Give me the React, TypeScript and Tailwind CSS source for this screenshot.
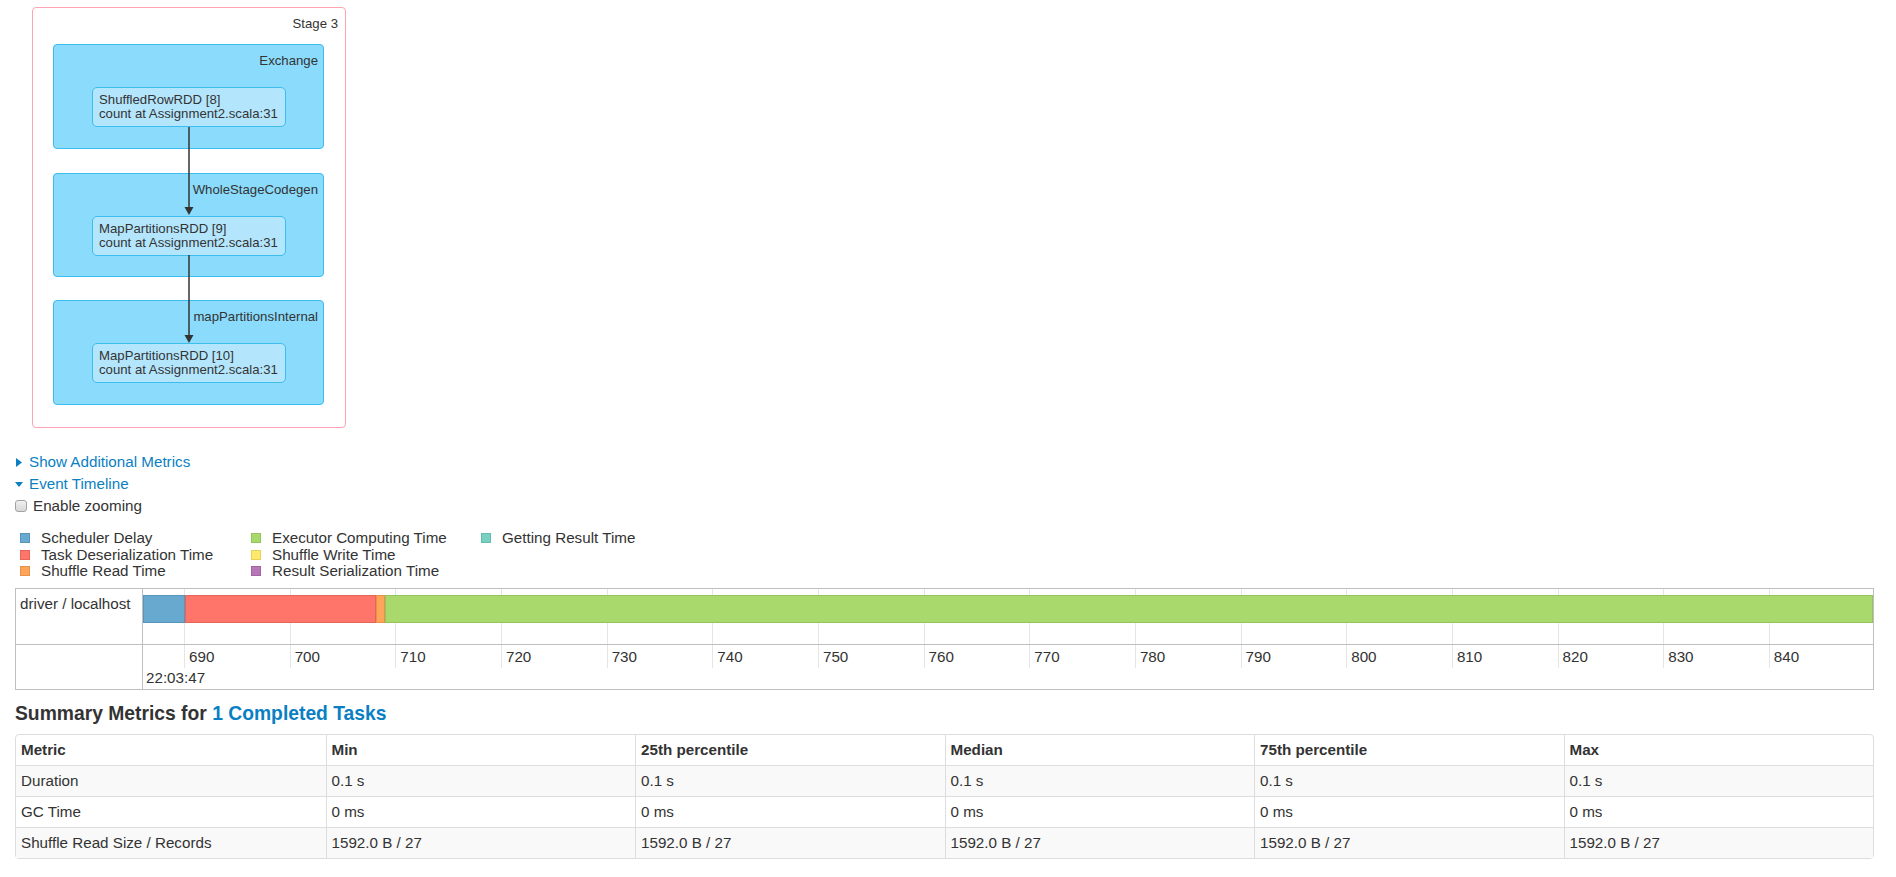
import React from "react";

const clusters = [
  { name: "Exchange", rdd: "ShuffledRowRDD [8]", h: "h-[105px]", mt: "mt-[13px]" },
  { name: "WholeStageCodegen", rdd: "MapPartitionsRDD [9]", h: "h-[104px]", mt: "mt-[24px]" },
  { name: "mapPartitionsInternal", rdd: "MapPartitionsRDD [10]", h: "h-[105px]", mt: "mt-[23px]" },
];

const legend = [
  { label: "Scheduler Delay", cls: "bg-[#67a9cf] border-[#5994bb]" },
  { label: "Task Deserialization Time", cls: "bg-[#ff7569] border-[#e5655a]" },
  { label: "Shuffle Read Time", cls: "bg-[#ffa55a] border-[#e6914c]" },
  { label: "Executor Computing Time", cls: "bg-[#a9d96d] border-[#94c45c]" },
  { label: "Shuffle Write Time", cls: "bg-[#ffe96b] border-[#e6d15c]" },
  { label: "Result Serialization Time", cls: "bg-[#b577b6] border-[#a065a2]" },
  { label: "Getting Result Time", cls: "bg-[#78d0c1] border-[#66bbad]" },
];

const ticks = [690, 700, 710, 720, 730, 740, 750, 760, 770, 780, 790, 800, 810, 820, 830, 840];

const columns = ["Metric", "Min", "25th percentile", "Median", "75th percentile", "Max"];

const rows = [
  { name: "Duration", value: "0.1 s", bg: "bg-[#f9f9f9]" },
  { name: "GC Time", value: "0 ms", bg: "bg-white" },
  { name: "Shuffle Read Size / Records", value: "1592.0 B / 27", bg: "bg-[#f9f9f9]" },
];

function StageDag() {
  return (
    <div className="relative ml-[17px] mt-[7px] h-[421px] w-[314px] rounded-[4px] border border-[#ffa3b3] pt-[8px] text-[13.2px] text-[#333]">
      <div className="h-[15px] pr-[7px] text-right leading-[15px]">Stage 3</div>
      {clusters.map((c) => (
        <div
          key={c.name}
          className={`${c.mt} ${c.h} ml-[20px] w-[271px] rounded-[4px] border border-[#3cbdee] bg-[#8adbfc] pt-[8px]`}
        >
          <div className="h-[15px] pr-[5px] text-right leading-[15px]">{c.name}</div>
          <div className="ml-[38px] mt-[19px] h-[40px] w-[194px] rounded-[5px] border border-[#3cbdee] bg-[#b3e6fd] px-[6px] pt-[5px] leading-[14px]">
            <div>{c.rdd}</div>
            <div>count at Assignment2.scala:31</div>
          </div>
        </div>
      ))}
      {/* edges between the RDD nodes */}
      <svg className="pointer-events-none absolute left-0 top-0" width="312" height="419">
        <line x1="156" y1="119" x2="156" y2="200" stroke="#333" strokeWidth="1.5" />
        <path d="M151.5 199 L160.5 199 L156 207 Z" fill="#333" />
        <line x1="156" y1="247" x2="156" y2="328" stroke="#333" strokeWidth="1.5" />
        <path d="M151.5 327 L160.5 327 L156 335 Z" fill="#333" />
      </svg>
    </div>
  );
}

function Timeline() {
  return (
    <div className="mt-[8px] flex h-[102px] border border-[#bfbfbf]">
      <div className="w-[127px] shrink-0 border-r border-[#bfbfbf]">
        <div className="h-[56px] border-b border-[#bfbfbf] pl-[4px] pt-[5px] leading-[20px]">driver / localhost</div>
      </div>
      <div className="min-w-0 flex-1 overflow-hidden">
        <div className="relative h-[56px] border-b border-[#bfbfbf]">
          <div className="flex h-full">
            <div className="w-[41px] shrink-0" />
            {ticks.map((t) => (
              <div key={t} className="h-full w-[105.67px] shrink-0 border-l border-[#e5e5e5]" />
            ))}
          </div>
          <div className="absolute left-0 right-0 top-[6px] flex h-[28px]">
            <div className="w-[42px] shrink-0 border border-[#5994bb] bg-[#67a9cf]" />
            <div className="w-[191px] shrink-0 border border-[#e5655a] bg-[#ff7569]" />
            <div className="w-[9px] shrink-0 border border-[#e6914c] bg-[#ffa55a]" />
            <div className="flex-1 border border-[#94c45c] bg-[#a9d96d]" />
          </div>
        </div>
        <div className="flex h-[23px]">
          <div className="w-[41px] shrink-0" />
          {ticks.map((t) => (
            <div key={t} className="h-full w-[105.67px] shrink-0 border-l border-[#e5e5e5] pl-[4px] pt-[2px] leading-[20px]">
              {t}
            </div>
          ))}
        </div>
        <div className="pl-[3px] leading-[20px]">22:03:47</div>
      </div>
    </div>
  );
}

export default function App() {
  return (
    <div className="min-h-screen bg-white pl-[15px] pr-[22px] font-['Liberation_Sans',Arial,sans-serif] text-[15.2px] text-[#333]">
      <StageDag />

      <div className="mt-[24px] flex items-center leading-[20px] text-[#0a7fc4]">
        <span className="flex w-[14px] shrink-0 pl-[1px]">
          <svg width="6" height="9" viewBox="0 0 6 9">
            <path d="M0 0 L6 4.5 L0 9 Z" fill="#0a7fc4" />
          </svg>
        </span>
        <span>Show Additional Metrics</span>
      </div>
      <div className="mt-[2px] flex items-center leading-[20px] text-[#0a7fc4]">
        <span className="flex w-[14px] shrink-0">
          <svg width="8" height="5" viewBox="0 0 8 5">
            <path d="M0 0 L8 0 L4 5 Z" fill="#0a7fc4" />
          </svg>
        </span>
        <span>Event Timeline</span>
      </div>
      <div className="mt-[2px] flex items-center leading-[20px]">
        <span className="mr-[6px] h-[12px] w-[12px] shrink-0 rounded-[3px] border border-[#a3a3a3] bg-gradient-to-b from-[#f0f0f0] to-[#d8d8d8]" />
        <span>Enable zooming</span>
      </div>

      <div className="mt-[14px] grid grid-flow-col grid-cols-[231px_230px_auto] grid-rows-3 pl-[5px]">
        {legend.map((l) => (
          <div key={l.label} className="flex h-[16.5px] items-center">
            <span className={`mr-[11px] h-[10px] w-[10px] shrink-0 border ${l.cls}`} />
            <span className="leading-[16px]">{l.label}</span>
          </div>
        ))}
      </div>

      <Timeline />

      <h4 className="mt-[13px] text-[19.3px] font-bold leading-[22px]">
        Summary Metrics for <span className="text-[#0a7fc4]">1 Completed Tasks</span>
      </h4>

      <table className="mt-[9px] w-full table-fixed border-separate border-spacing-0 rounded-[4px] border border-[#ddd] leading-[20px]">
        <thead>
          <tr>
            {columns.map((c, i) => (
              <th
                key={c}
                className={`px-[5px] py-[5px] text-left font-bold ${i > 0 ? "border-l border-[#ddd]" : ""}`}
              >
                {c}
              </th>
            ))}
          </tr>
        </thead>
        <tbody>
          {rows.map((r) => (
            <tr key={r.name} className={r.bg}>
              <td className="border-t border-[#ddd] px-[5px] py-[5px]">{r.name}</td>
              {[0, 1, 2, 3, 4].map((k) => (
                <td key={k} className="border-l border-t border-[#ddd] px-[5px] py-[5px]">
                  {r.value}
                </td>
              ))}
            </tr>
          ))}
        </tbody>
      </table>
    </div>
  );
}
